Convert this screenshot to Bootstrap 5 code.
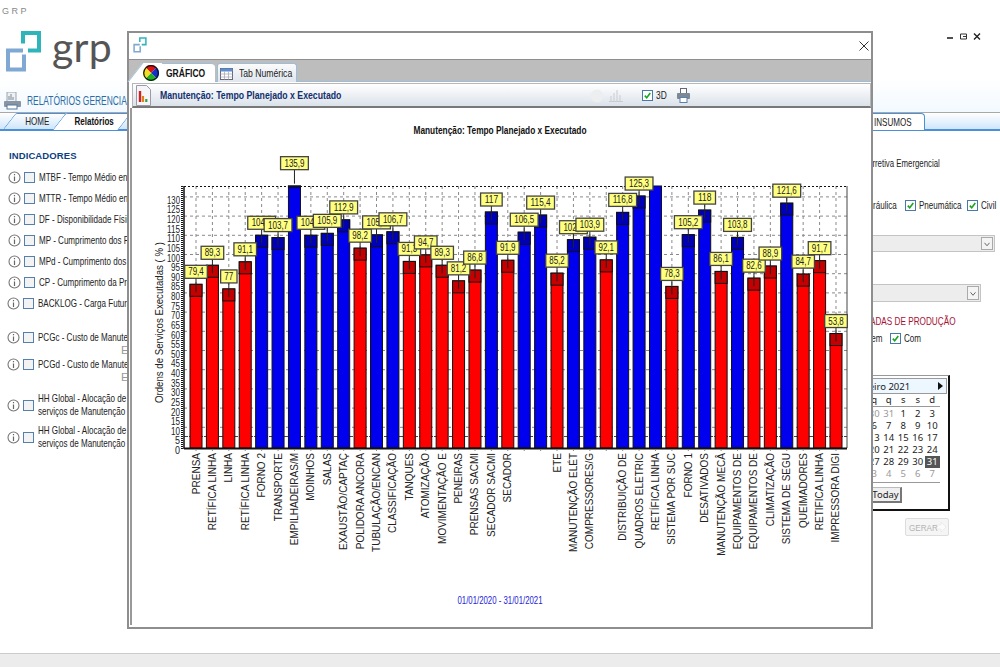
<!DOCTYPE html>
<html lang="pt-BR">
<head>
    <meta charset="UTF-8">
    <meta name="viewport" content="width=device-width, initial-scale=1.0">
    <title>GRP - Relatórios Gerenciais</title>
    <link href="https://cdn.jsdelivr.net/npm/bootstrap@5.3.0/dist/css/bootstrap.min.css" rel="stylesheet">
    <style>
        html, body { height: 667px; overflow: hidden; }
        body { font-family: "Liberation Sans", sans-serif; font-size: 11.5px; line-height: 13px; color: #222; background: #fff; }
        .cond { display: inline-block; white-space: nowrap; transform: scaleX(.7); transform-origin: 0 50%; }
        .cond-r { transform-origin: 100% 50%; transform: scaleX(.68); }
        .cond-c { transform-origin: 50% 50%; }
        .app-shell { height: 667px; }
        .app-top { height: 112px; background: linear-gradient(#fff 70%, #f2f9ff); }
        .grp-caption { font-size: 9px; letter-spacing: 2.5px; color: #888; padding: 5px 0 0 2px; height: 30px; }
        .grp-brand { gap: 11px; height: 43px; padding-left: 6px; }
        .grp-word { font-family: Lato, sans-serif; font-size: 41px; line-height: 34px; color: #555; letter-spacing: .3px; }
        .grp-report { margin-top: 19px; padding-left: 4px; gap: 6px; height: 18px; font-size: 12px; color: #2a6ca6; }
        .win-ctrl { padding: 33px 19px 0 0; gap: 6px; }
        .strip { height: 19px; border-top: 1px solid #a9a9a9; border-bottom: 2px solid #4a90d9; background: linear-gradient(#fff, #cfe6fb); padding-left: 14px; }
        .strip-tab { position: relative; height: 17px; line-height: 16px; text-align: center; }
        .strip-tab::before { content: ""; position: absolute; z-index: 0; top: 0; bottom: 0; left: -5px; right: 0; border: 1px solid #4a90d9; border-bottom: 0; transform: skewX(-38deg); border-radius: 2px 3px 0 0; }
        .strip-tab span { position: relative; }
        .tab-home { width: 47px; }
        .tab-rel { width: 61px; font-weight: 700; color: #111; margin-left: 3px; }
        .tab-rel::before { background: #fff; }
        .tab-ins { margin-left: auto; margin-right: 75px; width: 65px; background: #fff; border: 1px solid #4a90d9; border-bottom: 0; border-radius: 0 4px 0 0; }
        .tab-ins::before { display: none; }
        .work-left { width: 420px; padding-left: 8px; }
        .work-right { width: 240px; }
        .ind-title { height: 36px; padding: 18px 0 0 1px; font-weight: 700; font-size: 9.5px; letter-spacing: .1px; color: #0d3f80; }
        .ind-row { height: 21px; gap: 3px; white-space: nowrap; }
        .ind-row.shift { margin-left: -1px; }
        .ind-row.tight { height: 14px; }
        .ind-row.two { height: 26px; }
        .ind-first { margin-top: 16px; }
        .ind-sub { height: 13px; padding-left: 113px; color: #999; }
        .ind-hh { margin-top: 8px; }
        .ind-hh2 { margin-top: 6px; }
        .ind-txt { margin-left: 1px; }
        .opt-row { justify-content: flex-end; gap: 3px; height: 12px; white-space: nowrap; }
        .r1 { margin: 26px 60px 0 0; }
        .r2 { margin: 30px 5px 0 0; }
        .r2 .chk-gap { margin-right: 4px; }
        .l-hid { width: 37px; }
        .l-pneu { width: 41px; }
        .l-civil { width: 14px; }
        .l-sem { width: 15px; margin-right: 6px; }
        .l-com { width: 16px; }
        .sel-box { background: #ededed; border: 1px solid #c4c4c4; justify-content: flex-end; padding: 1px; }
        .sel-arrow { width: 12px; border: 1px solid #aaa; background: #f4f4f4; }
        .s1 { height: 17px; margin: 24px 5px 0 0; }
        .s2 { height: 18px; margin: 32px 19px 0 0; }
        .prod-title { margin: 13px 45px 0 0; height: 13px; line-height: 13px; text-align: right; font-size: 10.5px; color: #a51234; white-space: nowrap; }
        .prod-title .cond { transform: scaleX(.78); }
        .r3 { margin: 4px 80px 0 0; }
        .cal-box { width: 115px; height: 136px; margin: 31px 50px 0 auto; border: 1px solid #999; border-right: 2px solid #111; border-bottom: 2px solid #111; padding: 2px 0 0 2px; font-family: "Noto Sans", sans-serif; font-size: 9.5px; color: #222; background: #fff; }
        .cal-head { height: 16px; margin-right: 1px; background: #ecf7ff; border: 1px solid #9a9a9a; padding: 0 3px 0 16px; align-items: center; justify-content: space-between; line-height: 13px; }
        .cal-tri { width: 0; height: 0; border-left: 5px solid #111; border-top: 4px solid transparent; border-bottom: 4px solid transparent; }
        .cal-grid { display: grid; grid-template-columns: repeat(7, 14.5px); grid-auto-rows: 12px; line-height: 12px; text-align: center; width: 101.5px; }
        .cal-dow { height: 13px; border-bottom: 1px solid #999; }
        .cal-days { margin-top: 1px; height: 75px; border-bottom: 1px solid #999; }
        .cal-out { color: #999; }
        .cal-sel { background: #555; color: #fff; }
        .cal-today { margin: 4px 0 0 32px; width: 32px; height: 16px; line-height: 13px; text-align: center; background: #efefef; border: 1px solid #bbb; border-right: 2px solid #777; border-bottom: 2px solid #777; }
        .gerar-btn { width: 44px; height: 18px; margin: 7px 51px 0 auto; gap: 2px; border: 1px solid #ddd; border-radius: 2px; background: #f5f5f5; color: #b3b3b3; font-size: 9.5px; }
        .gerar-btn .cond { width: 25px; transform: scaleX(.85); }
        .status-strip { height: 14px; background: #ececec; border-top: 1px solid #ccc; }
        .gr-window { position: absolute; left: 127px; top: 31px; width: 746px; height: 598px; background: #fff; border: 2px solid #8e8e8e; z-index: 5; }
        .gr-title { height: 26px; padding: 4px 2px 0 4px; }
        .gr-tabs { height: 23px; background: #bdbdbd; border-bottom: 1px solid #9dbdd8; padding: 3px 0 0 14px; border-top: 1px solid #8e8e8e; }
        .gr-tab { position: relative; height: 19px; gap: 5px; }
        .gr-tab svg { flex-shrink: 0; }
        .gr-on { width: 72px; gap: 7px; font-weight: 700; font-size: 10px; color: #111; background: #fff; border-top: 1px solid #9dbdd8; border-radius: 0 4px 0 0; margin-right: 2px; }
        .gr-on::before { content: ""; position: absolute; left: -8px; top: -1px; bottom: 0; width: 20px; background: #fff; border-left: 1px solid #9dbdd8; transform: skewX(-38deg); z-index: 0; }
        .gr-on > * { position: relative; }
        .gr-on .cond { transform: scaleX(.85); }
        .gr-off { width: 80px; padding-left: 2px; gap: 6px; background: linear-gradient(#fbfbfb, #dfe6ee); border: 1px solid #9dbdd8; border-bottom: 0; border-radius: 3px 3px 0 0; }
        .gr-off .cond { width: 50px; transform: scaleX(.75); }
        .gr-body { height: 545px; padding: 1px 0 0 1px; }
        .gr-bar { height: 25px; margin-left: 2px; padding: 0 0 0 3px; border: 1px solid #b7b7b7; border-bottom: 2px solid #777; background: linear-gradient(#fff, #dbe2ea); font-size: 10.5px; font-weight: 700; color: #12306e; gap: 9px; }
        .gr-bar > span { transform: scaleX(.83); }
        .gr-tools { margin-left: auto; margin-right: 180px; gap: 5px; font-weight: 400; color: #222; }
        .t-chk { margin-left: 14px; gap: 3px; }
        .t-3d { width: 9px; transform: scaleX(.8); }
        .t-print { margin-left: 7px; }
        .gr-frame { height: 517px; border-left: 2px solid #999; }
        .gr-frame svg { display: block; }
        .gr-frame text { font-family: "Liberation Sans", sans-serif; }
    </style>
</head>
<body>
    <svg width="0" height="0" class="d-block">
        <symbol id="ico-info" viewBox="0 0 13 13">
            <circle cx="6.5" cy="6.5" r="5.5" fill="#fff" stroke="#777" stroke-width="1.1"/>
            <path d="M6.5 3v1.3M6.5 5.6v4.4" stroke="#666" stroke-width="1.2"/>
        </symbol>
        <symbol id="ico-box" viewBox="0 0 11 11">
            <rect x=".5" y=".5" width="10" height="10" fill="#f3f3f3" stroke="#5580ad"/>
        </symbol>
        <symbol id="ico-check" viewBox="0 0 11 11">
            <rect x=".5" y=".5" width="10" height="10" fill="#fff" stroke="#4a78a8"/>
            <path d="M2.8 5.6l1.9 2.1 3.6-4.6" fill="none" stroke="#1aa520" stroke-width="1.6"/>
        </symbol>
        <symbol id="ico-arrow" viewBox="0 0 12 14">
            <path d="M3 5l3 3.5L9 5" fill="none" stroke="#666" stroke-width="1.2"/>
        </symbol>
    </svg>

    <div class="app-shell d-flex flex-column">
        <!-- topo -->
        <div class="app-top d-flex justify-content-between">
            <div>
                <div class="grp-caption">GRP</div>
                <div class="grp-brand d-flex align-items-start">
                    <svg width="35" height="43" viewBox="6 30 35 42">
                        <path d="M23 43V32.5h16V50H28" fill="none" stroke="#2fb4bc" stroke-width="4"/>
                        <path d="M23 50H8v19h16V54" fill="none" stroke="#7fa8d3" stroke-width="4"/>
                    </svg>
                    <span class="grp-word">grp</span>
                </div>
                <div class="grp-report d-flex align-items-center text-nowrap">
                    <svg width="17" height="18" viewBox="0 0 17 18">
                        <rect x="3" y="0" width="9" height="10" fill="#eef1f4" stroke="#9aa3ad"/>
                        <path d="M5 8V4M7 8V2M9 8V5" stroke="#7a8796"/>
                        <rect x="0" y="9" width="17" height="6" rx="1" fill="#8795a5"/>
                        <rect x="3" y="13" width="10" height="4" fill="#fff" stroke="#59789c"/>
                    </svg>
                    <span class="cond">RELATÓRIOS GERENCIAIS</span>
                </div>
            </div>
            <div class="win-ctrl d-flex align-items-start">
                <svg width="8" height="6" viewBox="0 0 8 6"><path d="M1 5h6" stroke="#222" stroke-width="1.6"/></svg>
                <svg width="7" height="7" viewBox="0 0 7 7"><path d="M.5 1h6v5h-6zM3 3.5h3.5" fill="none" stroke="#333"/></svg>
                <svg width="8" height="7" viewBox="0 0 8 7"><path d="M1 .5l6 6M7 .5l-6 6" stroke="#222" stroke-width="1.4"/></svg>
            </div>
        </div>

        <!-- abas -->
        <div class="strip d-flex">
            <div class="strip-tab tab-home"><span class="cond cond-c">HOME</span></div>
            <div class="strip-tab tab-rel"><span class="cond cond-c">Relatórios</span></div>
            <div class="strip-tab tab-ins"><span class="cond cond-c">INSUMOS</span></div>
        </div>

        <div class="flex-grow-1 d-flex justify-content-between overflow-hidden">
            <!-- indicadores -->
            <div class="work-left">
                <div class="ind-title">INDICADORES</div>
                <div class="ind-row d-flex align-items-center"><svg width="13" height="13"><use href="#ico-info"/></svg><svg width="11" height="11"><use href="#ico-box"/></svg><span class="ind-txt cond">MTBF - Tempo Médio entre Falhas</span></div>
                <div class="ind-row d-flex align-items-center"><svg width="13" height="13"><use href="#ico-info"/></svg><svg width="11" height="11"><use href="#ico-box"/></svg><span class="ind-txt cond">MTTR - Tempo Médio entre Reparos</span></div>
                <div class="ind-row d-flex align-items-center"><svg width="13" height="13"><use href="#ico-info"/></svg><svg width="11" height="11"><use href="#ico-box"/></svg><span class="ind-txt cond">DF - Disponibilidade Física</span></div>
                <div class="ind-row d-flex align-items-center"><svg width="13" height="13"><use href="#ico-info"/></svg><svg width="11" height="11"><use href="#ico-box"/></svg><span class="ind-txt cond">MP - Cumprimento dos Planos</span></div>
                <div class="ind-row d-flex align-items-center"><svg width="13" height="13"><use href="#ico-info"/></svg><svg width="11" height="11"><use href="#ico-box"/></svg><span class="ind-txt cond">MPd - Cumprimento dos Planos</span></div>
                <div class="ind-row d-flex align-items-center"><svg width="13" height="13"><use href="#ico-info"/></svg><svg width="11" height="11"><use href="#ico-box"/></svg><span class="ind-txt cond">CP - Cumprimento da Programação</span></div>
                <div class="ind-row shift d-flex align-items-center"><svg width="13" height="13"><use href="#ico-info"/></svg><svg width="11" height="11"><use href="#ico-box"/></svg><span class="ind-txt cond">BACKLOG - Carga Futura</span></div>

                <div class="ind-row shift tight ind-first d-flex align-items-center"><svg width="13" height="13"><use href="#ico-info"/></svg><svg width="11" height="11"><use href="#ico-box"/></svg><span class="ind-txt cond">PCGc - Custo de Manutenção</span></div>
                <div class="ind-sub">Em</div>
                <div class="ind-row shift tight d-flex align-items-center"><svg width="13" height="13"><use href="#ico-info"/></svg><svg width="11" height="11"><use href="#ico-box"/></svg><span class="ind-txt cond">PCGd - Custo de Manutenção</span></div>
                <div class="ind-sub">Em</div>

                <div class="ind-row shift two ind-hh d-flex align-items-center"><svg width="13" height="13"><use href="#ico-info"/></svg><svg width="11" height="11"><use href="#ico-box"/></svg><span class="ind-txt cond">HH Global - Alocação de mão de obra em<br>serviços de Manutenção</span></div>
                <div class="ind-row shift two ind-hh2 d-flex align-items-center"><svg width="13" height="13"><use href="#ico-info"/></svg><svg width="11" height="11"><use href="#ico-box"/></svg><span class="ind-txt cond">HH Global - Alocação de mão de obra em<br>serviços de Manutenção Preventiva</span></div>
            </div>

            <!-- filtros -->
            <div class="work-right">
                <div class="opt-row r1 d-flex align-items-center"><span class="cond cond-r">Corretiva Emergencial</span></div>
                <div class="opt-row r2 d-flex align-items-center">
                    <span class="cond l-hid chk-gap">Hidráulica</span>
                    <svg width="11" height="11"><use href="#ico-check"/></svg><span class="cond l-pneu chk-gap">Pneumática</span>
                    <svg width="11" height="11"><use href="#ico-check"/></svg><span class="cond l-civil">Civil</span>
                </div>
                <div class="sel-box s1 d-flex"><div class="sel-arrow"><svg width="10" height="13"><use href="#ico-arrow"/></svg></div></div>
                <div class="sel-box s2 d-flex"><div class="sel-arrow"><svg width="10" height="14"><use href="#ico-arrow"/></svg></div></div>
                <div class="prod-title"><span class="cond cond-r">PARADAS DE PRODUÇÃO</span></div>
                <div class="opt-row r3 d-flex align-items-center"><span class="cond l-sem">Sem</span><svg width="11" height="11"><use href="#ico-check"/></svg><span class="cond l-com">Com</span></div>

                <div class="cal-box">
                    <div class="cal-head d-flex"><span>janeiro 2021</span><span class="cal-tri"></span></div>
                    <div class="cal-grid cal-dow"><span>s</span><span>t</span><span>q</span><span>q</span><span>s</span><span>s</span><span>d</span></div>
                    <div class="cal-grid cal-days" id="calDays"></div>
                    <div class="cal-today">Today</div>
                </div>
                <div class="gerar-btn d-flex align-items-center justify-content-center">
                    <span class="cond">GERAR</span>
                    <svg width="10" height="10" viewBox="0 0 10 10"><path d="M0 3h5V0l5 5-5 5V7H0z" fill="#fbfbfb" stroke="#e4e4e4" stroke-width=".6"/></svg>
                </div>
            </div>
        </div>
        <div class="status-strip"></div>
    </div>

    <!-- janela do grafico -->
    <div class="gr-window">
        <div class="gr-title d-flex justify-content-between align-items-start">
            <svg width="14" height="16" viewBox="6 30 35 42">
                <path d="M23 43V32.5h16V50H28" fill="none" stroke="#2fb4bc" stroke-width="4"/>
                <path d="M23 50H8v19h16V54" fill="none" stroke="#7fa8d3" stroke-width="4"/>
            </svg>
            <svg class="mt-1" width="10" height="10" viewBox="0 0 10 10"><path d="M.5.5l9 9M9.5.5l-9 9" stroke="#333"/></svg>
        </div>
        <div class="gr-tabs d-flex">
            <div class="gr-tab gr-on d-flex align-items-center">
                <svg width="16" height="16" viewBox="0 0 16 16">
                    <path d="M8 8L2.3 2.3A8 8 0 0 1 13.7 2.3z" fill="#e01010"/>
                    <path d="M8 8L13.7 2.3A8 8 0 0 1 13.7 13.7z" fill="#1030d0"/>
                    <path d="M8 8L13.7 13.7A8 8 0 0 1 2.3 13.7z" fill="#20b020"/>
                    <path d="M8 8L2.3 13.7A8 8 0 0 1 2.3 2.3z" fill="#f0e020"/>
                    <circle cx="8" cy="8" r="7.3" fill="none" stroke="#111" stroke-width="1.2"/>
                </svg>
                <span class="cond">GRÁFICO</span>
            </div>
            <div class="gr-tab gr-off d-flex align-items-center">
                <svg width="13" height="13" viewBox="0 0 13 13">
                    <rect x=".5" y="1.5" width="12" height="11" fill="#fff" stroke="#667"/>
                    <rect x=".5" y="1.5" width="12" height="3" fill="#5b8fd0"/>
                    <path d="M.5 7h12M.5 10h12M4.5 4.5v8M8.5 4.5v8" stroke="#aab" stroke-width=".8"/>
                </svg>
                <span class="cond">Tab Numérica</span>
            </div>
        </div>
        <div class="gr-body">
            <div class="gr-bar d-flex align-items-center">
                <svg width="15" height="21" viewBox="0 0 15 21">
                    <path d="M.5.5h10l4 4v16H.5z" fill="#f6f6f8" stroke="#9a9aa8"/>
                    <path d="M4 17V6" stroke="#d02020" stroke-width="2.4"/>
                    <path d="M7 17v-6" stroke="#e08020" stroke-width="2.2"/>
                    <path d="M10.300 17v-3" stroke="#30a040" stroke-width="2.2"/>
                </svg>
                <span class="cond">Manutenção: Tempo Planejado x Executado</span>
                <div class="gr-tools d-flex align-items-center">
                    <svg width="14" height="15" viewBox="0 0 14 15"><circle cx="7" cy="8" r="6.500" fill="#eceef0"/></svg>
                    <svg width="14" height="14" viewBox="0 0 14 14"><path d="M2 13V8M5 13V5M8 13V2M11 13V7M0 13.500h14" stroke="#c9ccd0"/></svg>
                    <div class="t-chk d-flex align-items-center"><svg width="11" height="11"><use href="#ico-check"/></svg><span class="cond t-3d">3D</span></div>
                    <svg class="t-print" width="13" height="15" viewBox="0 0 13 15">
                        <rect x="3.500" y=".5" width="6" height="5" fill="#fff" stroke="#667"/>
                        <rect x="0" y="5" width="13" height="6" rx="1" fill="#7c8896"/>
                        <rect x="3" y="9.500" width="7" height="5" fill="#fff" stroke="#5c7fa8"/>
                    </svg>
                </div>
            </div>
            <div class="gr-frame">
                <svg id="chart" width="738" height="515" viewBox="132 109 738 515"></svg>
            </div>
        </div>
    </div>

    <script src="https://cdn.jsdelivr.net/npm/bootstrap@5.3.0/dist/js/bootstrap.bundle.min.js"></script>
    <script>
        // calendario
        var days = [[28,1],[29,1],[30,1],[31,1],1,2,3,4,5,6,7,8,9,10,11,12,13,14,15,16,17,18,19,20,21,22,23,24,25,26,27,28,29,30,31,[1,1],[2,1],[3,1],[4,1],[5,1],[6,1],[7,1]];
        document.getElementById('calDays').innerHTML = days.map(function (d) {
            if (Array.isArray(d)) return '<span class="cal-out">' + d[0] + '</span>';
            return '<span' + (d === 31 ? ' class="cal-sel"' : '') + '>' + d + '</span>';
        }).join('');

        // grafico: [rotulo, valor, cor]
        var R = 'r', B = 'b';
        var data = [
            ['PRENSA', 79.4, R], ['RETÍFICA LINHA', 89.3, R], ['LINHA', 77, R], ['RETÍFICA LINHA', 91.1, R],
            ['FORNO 2', 104.9, B], ['TRANSPORTE', 103.7, B], ['EMPILHADEIRAS/M', 135.9, B], ['MOINHOS', 104.9, B],
            ['SALAS', 105.9, B], ['EXAUSTÃO/CAPTAÇ', 112.9, B], ['POLIDORA ANCORA', 98.2, R], ['TUBULAÇÃO/ENCAN', 105.1, B],
            ['CLASSIFICAÇÃO', 106.7, B], ['TANQUES', 91.3, R], ['ATOMIZAÇÃO', 94.7, R], ['MOVIMENTAÇÃO E', 89.3, R],
            ['PENEIRAS', 81.2, R], ['PRENSAS SACMI', 86.8, R], ['SECADOR SACMI', 117, B], ['SECADOR', 91.9, R],
            ['', 106.5, B], ['', 115.4, B], ['ETE', 85.2, R], ['MANUTENÇÃO ELÉT', 102.6, B],
            ['COMPRESSORES/G', 103.9, B], ['', 92.1, R], ['DISTRIBUIÇÃO DE', 116.8, B], ['QUADROS ELETRIC', 125.3, B],
            ['RETÍFICA LINHA', 137.2, B], ['SISTEMA POR SUC', 78.3, R], ['FORNO 1', 105.2, B], ['DESATIVADOS', 118, B],
            ['MANUTENÇÃO MECÂ', 86.1, R], ['EQUIPAMENTOS DE', 103.8, B], ['EQUIPAMENTOS DE', 82.6, R], ['CLIMATIZAÇÃO', 88.9, R],
            ['SISTEMA DE SEGU', 121.6, B], ['QUEIMADORES', 84.7, R], ['RETIFICA LINHA', 91.7, R], ['IMPRESSORA DIGI', 53.8, R]
        ];
        var s = '', i, k;
        var top0 = 187, base = 449, left = 184, right = 847;

        s += '<text x="500" y="135" text-anchor="middle" font-size="10" font-weight="700" fill="#111" textLength="173" lengthAdjust="spacingAndGlyphs">Manutenção: Tempo Planejado x Executado</text>';
        s += '<text transform="rotate(-90 163 323.5)" x="163" y="323.5" text-anchor="middle" font-size="11" fill="#222" textLength="161" lengthAdjust="spacingAndGlyphs">Ordens de Serviços Executadas ( % )</text>';
        s += '<text x="500" y="605" text-anchor="middle" font-size="10" fill="#2424d8" textLength="85" lengthAdjust="spacingAndGlyphs">01/01/2020 - 31/01/2021</text>';

        // grade
        for (k = 0; k <= 12; k++) {
            var gy = 428.3 - 19.2 * k;
            s += '<line x1="' + left + '" x2="' + right + '" y1="' + gy + '" y2="' + gy + '" stroke="#8a8a8a" stroke-dasharray="3 3"/>';
        }
        for (i = 0; i < 40; i++) {
            var gx = 196 + i * 16.41;
            s += '<line x1="' + gx + '" x2="' + gx + '" y1="' + top0 + '" y2="' + (base + 3) + '" stroke="#8a8a8a" stroke-dasharray="3 3"/>';
        }
        s += '<line x1="' + left + '" x2="' + right + '" y1="187.500" y2="187.500" stroke="#111" stroke-dasharray="2 2"/>';
        s += '<line x1="' + right + '" x2="' + right + '" y1="187" y2="' + base + '" stroke="#444"/>';
        s += '<line x1="' + left + '" x2="' + right + '" y1="437.500" y2="437.500" stroke="#444" stroke-dasharray="4 1"/>';

        // eixo y
        for (k = 0; k <= 26; k++) {
            var v = k * 5, ly = 451 - v * 1.925 + 4;
            var tl = v > 99 ? 13 : (v > 9 ? 9 : 5);
            s += '<text x="180" y="' + ly + '" text-anchor="end" font-size="10.500" fill="#222" textLength="' + tl + '" lengthAdjust="spacingAndGlyphs">' + v + '</text>';
        }
        s += '<line x1="182" x2="182" y1="187" y2="450" stroke="#111" stroke-width="2" stroke-dasharray="1 1"/>';
        s += '<line x1="' + left + '" x2="' + left + '" y1="187" y2="450" stroke="#111" stroke-width="1.500"/>';

        // barras
        var labels = '';
        data.forEach(function (d, n) {
            var x = 190 + n * 16.41, cx = x + 6;
            var top = 438 - d[1] * 1.923;
            var vis = Math.max(top, top0);
            var main = d[2] === R ? '#ff0000' : '#0000ee';
            var cap = d[2] === R ? '#c40000' : '#0000b8';
            s += '<rect x="' + x + '" y="' + vis + '" width="12" height="' + (base - vis) + '" fill="' + main + '" stroke="#111"/>';
            if (top + 12 > top0) {
                s += '<rect x="' + x + '" y="' + vis + '" width="12" height="' + (top + 12 - vis) + '" fill="' + cap + '" stroke="#111"/>';
            }
            if (n === 28) return;
            var txt = String(d[1]).replace('.', ',');
            var digits = txt.replace(',', '').length;
            var hasComma = txt.indexOf(',') > -1;
            var w = digits * 5.2 + (hasComma ? 1 : 0) + 6;
            var tw = digits * 4.5 + (hasComma ? 2 : 0);
            var by = top - 19;
            labels += '<line x1="' + cx + '" x2="' + cx + '" y1="' + (by + 13) + '" y2="' + (top + 8) + '" stroke="#222"/>';
            labels += '<rect x="' + (cx - w / 2) + '" y="' + by + '" width="' + w + '" height="13" fill="#ffff80" stroke="#444" stroke-width="1.300"/>';
            labels += '<text x="' + cx + '" y="' + (by + 10) + '" text-anchor="middle" font-size="10" fill="#222" textLength="' + tw + '" lengthAdjust="spacingAndGlyphs">' + txt + '</text>';
        });
        s += '<line x1="' + left + '" x2="' + right + '" y1="449.500" y2="449.500" stroke="#111" stroke-width="2"/>';
        s += labels;

        // rotulos do eixo x
        data.forEach(function (d, n) {
            if (!d[0]) return;
            var tx = 199.500 + n * 16.41, ty = 454;
            s += '<text transform="rotate(-90 ' + tx + ' ' + ty + ')" x="' + tx + '" y="' + ty + '" text-anchor="end" font-size="10" fill="#222">' + d[0] + '</text>';
        });
        document.getElementById('chart').innerHTML = s;
    </script>
</body>
</html>
